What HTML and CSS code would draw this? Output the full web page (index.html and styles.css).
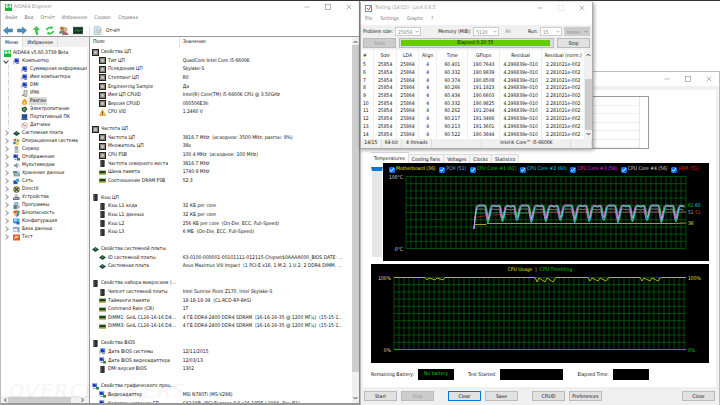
FILE: index.html
```html
<!DOCTYPE html>
<html lang="ru">
  <head>
    <meta charset="UTF-8" />
    <meta name="viewport" content="width=device-width, initial-scale=1.0" />
    <title>AIDA64 Engineer</title>
    <link rel="stylesheet" href="styles.css">
  </head>
  <body>
    <svg class="sprite" aria-hidden="true">
      <symbol id="i-cpu" viewBox="0 0 14 14"><rect x="1" y="1" width="12" height="12" fill="#8d8874" stroke="#222" stroke-width="2"/><rect x="4" y="4" width="6" height="6" fill="#d4d4d4" stroke="#777"/></symbol>
      <symbol id="i-chip" viewBox="0 0 14 14"><path d="M2 2h10M2 5h10M2 8h10M2 11h10" stroke="#777" stroke-width="1.5"/><rect x="3" y="0" width="8" height="14" fill="#303030"/><path d="M5 2v10" stroke="#666"/></symbol>
      <symbol id="i-ram" viewBox="0 0 14 14"><rect y="3" width="14" height="8" fill="#23923a"/><rect x="2" y="5" width="10" height="3" fill="#222"/><path d="M0 10h14" stroke="#d9b53c" stroke-width="2"/></symbol>
      <symbol id="i-board" viewBox="0 0 14 14"><path d="M7 2l7 5-7 5-7-5z" fill="#17442a"/><path d="M7 4l3 2-3 2-3-2z" fill="#4f8a62"/></symbol>
      <symbol id="i-pc" viewBox="0 0 14 14"><path d="M0 4h3v9H0z" fill="#c3c8d2"/><rect x="3" y="1" width="9" height="8" fill="#1834c8" stroke="#a9b3cc"/><path d="M8 2h3v5z" fill="#7fa0f5"/><path d="M5 12h8l-2-3H7z" fill="#8a91a0"/></symbol>
      <symbol id="i-gpu" viewBox="0 0 14 14"><rect x="1" y="1" width="9" height="7" fill="#1834c8" stroke="#a9b3cc"/><path d="M6 2h3v4z" fill="#7fa0f5"/><path d="M3 10h4v2H3z" fill="#888"/><rect x="8" y="8" width="6" height="5" fill="#2f8a3e"/></symbol>
      <symbol id="i-warn" viewBox="0 0 14 14"><path d="M7 1l6.500 12H.5z" fill="#fdc526" stroke="#d08a10"/><path d="M7 5v4M7 10v2" stroke="#222" stroke-width="1.500"/></symbol>
      <symbol id="i-ipmi" viewBox="0 0 14 14"><rect x="6" y="1" width="6" height="12" fill="#d5d5cd" stroke="#777"/><path d="M1 12h6V8H4z" fill="#9b9486"/></symbol>
      <symbol id="i-fire" viewBox="0 0 14 14"><path d="M6 0c1 3 5 4 6 8 1 4-2 6-5 6s-6-2-5-6c1-3 4-4 4-8z" fill="#f39619"/><path d="M7 6c3 3 3 7 0 7s-3-4 0-7z" fill="#ffe25a"/></symbol>
      <symbol id="i-power" viewBox="0 0 14 14"><path d="M1 4l8-3 4 5-5 7-6-3z" fill="#3d5146"/><path d="M3 6l5-2 2 3-4 3z" fill="#4fb557"/></symbol>
      <symbol id="i-laptop" viewBox="0 0 14 14"><rect x="2" y="1" width="10" height="8" fill="#1a49c2" stroke="#445"/><path d="M0 12h14l-2-3H2z" fill="#545c6b"/></symbol>
      <symbol id="i-gauge" viewBox="0 0 14 14"><circle cx="7" cy="7" r="6" fill="#f4efef" stroke="#a88"/><path d="M7 8L4 4M7 8l3-2" stroke="#cf2d2d" stroke-width="1.500"/></symbol>
      <symbol id="i-win" viewBox="0 0 14 14"><path d="M2 2q3-2 5 0L6 7Q4 5 1 7z" fill="#f0602c"/><path d="M8 2q3 2 5 0l-1 5q-3 2-5 0z" fill="#79b92d"/><path d="M1 8q3-2 5 0l-1 5q-2-2-5 0z" fill="#2c8ad6"/><path d="M7 8q3 2 5 0l-1 5q-3 2-5 0z" fill="#f8c421"/></symbol>
      <symbol id="i-server" viewBox="0 0 14 14"><rect x="4" y="0" width="6" height="14" fill="#c5cfc8" stroke="#8b968f"/><path d="M5 3h4M5 6h4" stroke="#4b7b63"/></symbol>
      <symbol id="i-sound" viewBox="0 0 14 14"><path d="M2 5h3l4-4v12L5 9H2z" fill="#858c94"/><path d="M11 4q2 3 0 6" fill="none" stroke="#3b78b8"/></symbol>
      <symbol id="i-disk" viewBox="0 0 14 14"><rect x="0" y="2" width="9" height="4" fill="#5c8c8b"/><rect x="2" y="7" width="11" height="5" fill="#9fb9bd" stroke="#48686c"/><circle cx="11" cy="4" r="3" fill="#a7d0e4"/></symbol>
      <symbol id="i-net" viewBox="0 0 14 14"><rect x="1" y="5" width="8" height="7" fill="#1c42cf" stroke="#99a"/><circle cx="9" cy="5" r="4" fill="#58a5dd"/><path d="M7 3l3 1-1 3z" fill="#48ae4d"/></symbol>
      <symbol id="i-dx" viewBox="0 0 14 14"><circle cx="7" cy="7" r="6" fill="#e7d721" stroke="#222"/><path d="M3 3l8 8M11 3l-8 8" stroke="#2340a8" stroke-width="2.500"/></symbol>
      <symbol id="i-dev" viewBox="0 0 14 14"><rect x="3" y="1" width="7" height="6" fill="#b8c2c8"/><path d="M0 12V8l4-2h9v6z" fill="#64757d"/><path d="M2 9h9" stroke="#dfe5e7"/></symbol>
      <symbol id="i-apps" viewBox="0 0 14 14"><rect x="2" y="0" width="9" height="7" fill="#9fb7cf"/><rect x="1" y="6" width="7" height="8" fill="#597e8f"/><rect x="7" y="7" width="6" height="6" fill="#a8a698"/></symbol>
      <symbol id="i-shield" viewBox="0 0 14 14"><path d="M7 0l6 2v5H7z" fill="#3ca346"/><path d="M7 0L1 2v5h6z" fill="#e3552d"/><path d="M1 7h6v7Q2 12 1 7z" fill="#f5c42c"/><path d="M13 7H7v7q5-2 6-7z" fill="#2e6fd0"/></symbol>
      <symbol id="i-conf" viewBox="0 0 14 14"><rect x="0" y="1" width="13" height="10" rx="2" fill="#4b9bdf"/><path d="M2 3h6v3H2z" fill="#bfe1fa"/><path d="M7 8h6v5H7z" fill="#2c67ad"/></symbol>
      <symbol id="i-db" viewBox="0 0 14 14"><rect x="0" y="3" width="9" height="8" fill="#e8eef7" stroke="#7a8eb3"/><path d="M0 4h9" stroke="#4a76bd" stroke-width="2"/><path d="M10 2h3v11h-3z" fill="#8c9bb1"/></symbol>
      <symbol id="i-test" viewBox="0 0 14 14"><rect x="0" y="1" width="14" height="12" fill="#ee5c22"/><path d="M3 10l3-6 2 4 3-4" stroke="#fff" fill="none" stroke-width="1.500"/></symbol>
      <symbol id="i-arrow" viewBox="0 0 20 16"><path d="M1 8l8-7v4h10v6H9v4z" fill="#4c8fc2" stroke="#2c6b9d"/></symbol>
      <symbol id="i-up" viewBox="0 0 8 5"><path d="M1 4l3-3 3 3" fill="none" stroke="#333" stroke-width="1.500"/></symbol>
      <symbol id="i-down" viewBox="0 0 8 5"><path d="M1 1l3 3 3-3" fill="none" stroke="#333" stroke-width="1.500"/></symbol>
      <symbol id="i-min" viewBox="0 0 10 10"><path d="M1 5h8" stroke="currentColor"/></symbol>
      <symbol id="i-max" viewBox="0 0 10 10"><rect x="1" y="1" width="8" height="8" fill="none" stroke="currentColor"/></symbol>
      <symbol id="i-close" viewBox="0 0 10 10"><path d="M1 1l8 8M9 1L1 9" stroke="currentColor"/></symbol>
    </svg>

    <main class="desktop">
      <!-- AIDA64 -->
      <section class="window aida">
        <header class="titlebar">
          <span class="logo">64</span>
          <span class="title">AIDA64 Engineer</span>
          <button aria-label="Свернуть"><svg><use href="#i-min"/></svg></button>
          <button aria-label="Развернуть"><svg><use href="#i-max"/></svg></button>
          <button aria-label="Закрыть"><svg><use href="#i-close"/></svg></button>
        </header>
        <nav class="menu">
          <a href="#">Файл</a><a href="#">Вид</a><a href="#">Отчёт</a><a href="#">Избранное</a><a href="#">Сервис</a><a href="#">Справка</a>
        </nav>
        <div class="toolbar">
          <button aria-label="Назад"><svg><use href="#i-arrow"/></svg></button>
          <button aria-label="Вперёд" class="flip"><svg><use href="#i-arrow"/></svg></button>
          <button aria-label="Вверх"><svg viewBox="0 0 20 18"><path d="M11 17Q8 12 9 7H5l6-6 6 6h-4q-1 5 1 10z" fill="#3fcb45" stroke="#1e9a2b"/></svg></button>
          <button aria-label="Обновить"><svg viewBox="0 0 20 18" fill="none" stroke="#38c445" stroke-width="3"><path d="M3 8q2-6 10-5M17 10q-2 6-10 5"/><path d="M11 0l6 3-5 4zM9 18l-6-3 5-4z" fill="#38c445" stroke="none"/></svg></button>
          <button aria-label="Пользователи"><svg viewBox="0 0 20 18"><circle cx="6" cy="5" r="4" fill="#b27b3b"/><path d="M0 15q0-6 6-6t6 6z" fill="#5d8f63"/><circle cx="12" cy="7" r="4" fill="#e6b98a" stroke="#85552b"/><path d="M6 18q0-6 6-6t7 6z" fill="#a56b6b"/></svg></button>
          <button aria-label="Монитор"><svg viewBox="0 0 20 18"><rect y="2" width="20" height="14" fill="#14351d" stroke="#889"/><path d="M2 10h4l2-4 3 6 2-4h5" fill="none" stroke="#37c652"/></svg></button>
          <button class="report"><svg viewBox="0 0 20 18"><path d="M2 1h11l3 3v13H2z" fill="#d9e9f5" stroke="#8aa8bd"/><path d="M5 6h7M5 9h6M5 12h5" stroke="#82a7c2"/><path d="M18 6l-7 9-2 1 1-3 7-8z" fill="#e2ad3c"/></svg>Отчёт</button>
        </div>
        <div class="panes">
          <aside class="side">
            <div class="side-tabs"><button class="active">Меню</button><button>Избранное</button></div>
            <ul class="tree">
              <li><span class="logo">64</span>AIDA64 v5.60.3739 Beta</li>
              <li class="l1 open"><svg><use href="#i-pc"/></svg>Компьютер</li>
              <li class="l2"><svg><use href="#i-pc"/></svg>Суммарная информация</li>
              <li class="l2"><svg><use href="#i-pc"/></svg>Имя компьютера</li>
              <li class="l2"><svg><use href="#i-pc"/></svg>DMI</li>
              <li class="l2"><svg><use href="#i-ipmi"/></svg>IPMI</li>
              <li class="l2"><svg><use href="#i-fire"/></svg><mark>Разгон</mark></li>
              <li class="l2"><svg><use href="#i-power"/></svg>Электропитание</li>
              <li class="l2"><svg><use href="#i-laptop"/></svg>Портативный ПК</li>
              <li class="l2"><svg><use href="#i-gauge"/></svg>Датчики</li>
              <li class="l1"><svg><use href="#i-board"/></svg>Системная плата</li>
              <li class="l1"><svg><use href="#i-win"/></svg>Операционная система</li>
              <li class="l1"><svg><use href="#i-server"/></svg>Сервер</li>
              <li class="l1"><svg><use href="#i-gpu"/></svg>Отображение</li>
              <li class="l1"><svg><use href="#i-sound"/></svg>Мультимедиа</li>
              <li class="l1"><svg><use href="#i-disk"/></svg>Хранение данных</li>
              <li class="l1"><svg><use href="#i-net"/></svg>Сеть</li>
              <li class="l1"><svg><use href="#i-dx"/></svg>DirectX</li>
              <li class="l1"><svg><use href="#i-dev"/></svg>Устройства</li>
              <li class="l1"><svg><use href="#i-apps"/></svg>Программы</li>
              <li class="l1"><svg><use href="#i-shield"/></svg>Безопасность</li>
              <li class="l1"><svg><use href="#i-conf"/></svg>Конфигурация</li>
              <li class="l1"><svg><use href="#i-db"/></svg>База данных</li>
              <li class="l1"><svg><use href="#i-test"/></svg>Тест</li>
            </ul>
            <div class="hscroll"><svg class="left"><use href="#i-down"/></svg><i></i><svg class="right"><use href="#i-down"/></svg></div>
          </aside>
          <div class="details">
            <div class="list">
              <div class="list-head"><span>Поле</span><span>Значение</span></div>
              <div class="list-body">
                <table class="props">
                  <colgroup><col class="field"><col></colgroup>
                  <tbody id="props"></tbody>
                </table>
              </div>
            </div>
            <div class="vscroll"><svg><use href="#i-up"/></svg><i></i><svg><use href="#i-down"/></svg></div>
          </div>
        </div>
      </section>

      <!-- System stability test -->
      <section class="window stability">
        <header class="titlebar">
          <span class="title"></span>
          <button aria-label="Minimize"><svg><use href="#i-min"/></svg></button>
          <button aria-label="Maximize"><svg><use href="#i-max"/></svg></button>
          <button aria-label="Close window"><svg><use href="#i-close"/></svg></button>
        </header>
        <div class="page">
          <div class="log"><i></i><i></i><i></i><i></i><i></i><i></i></div>
          <div class="tabs"><button class="active">Temperatures</button><button>Cooling Fans</button><button>Voltages</button><button>Clocks</button><button>Statistics</button></div>
          <div class="sensors">
            <div class="strip"></div>
            <div class="graph">
              <div class="legend">
                <label class="mb"><input type="checkbox" checked>Motherboard (36)</label>
                <label class="pch"><input type="checkbox" checked>PCH (51)</label>
                <label class="c1"><input type="checkbox" checked>CPU Core #1 (61)</label>
                <label class="c2"><input type="checkbox" checked>CPU Core #2 (60)</label>
                <label class="c3"><input type="checkbox" checked>CPU Core #3 (59)</label>
                <label class="c4"><input type="checkbox" checked>CPU Core #4 (56)</label>
                <label class="vrm"><input type="checkbox" checked>VRM (51)</label>
              </div>
              <svg class="plot" id="temps" viewBox="0 0 326 88">
                <g id="tempGrid"></g>
                <text x="20" y="6" class="end">100°C</text>
                <text x="20" y="78" class="end">0°C</text>
                <g id="tempLines"></g>
                <text x="305" y="34" class="c1">61</text>
                <text x="312" y="34" class="c2">60</text>
                <text x="305" y="41" class="pch">51</text>
                <text x="312" y="41" class="vrm">51</text>
                <text x="305" y="52" class="mb">36</text>
              </svg>
            </div>
          </div>
          <div class="graph usage">
            <p class="caption"><span class="mb">CPU Usage</span><span>|</span><span class="c1">CPU Throttling</span></p>
            <svg class="plot" viewBox="0 0 338 89">
              <g id="usageGrid"></g>
              <text x="20" y="6" class="end">100%</text>
              <text x="20" y="78" class="end">0%</text>
              <g id="usageLines"></g>
              <text x="317" y="6" class="mb">100%</text>
              <text x="317" y="78" class="c1">0%</text>
            </svg>
          </div>
          <div class="times">
            <span>Remaining Battery:</span><output class="short">No battery</output>
            <span>Test Started:</span><output class="long"></output>
            <span>Elapsed Time:</span><output class="short"></output>
          </div>
        </div>
        <footer class="actions">
          <button>Start</button><button disabled>Stop</button>
          <button class="default gap">Clear</button><button>Save</button>
          <button class="gap">CPUID</button><button>Preferences</button>
          <button class="last">Close</button>
        </footer>
      </section>

      <!-- LinX -->
      <section class="window linx">
        <header class="titlebar">
          <svg class="app" viewBox="0 0 14 14"><rect x="1" y="1" width="12" height="12" fill="#fff" stroke="#4d9ce0" stroke-width="2"/><path d="M4 6l3 4 5-8" fill="none" stroke="#e4502b" stroke-width="2"/></svg>
          <span class="title">Testing (14/15) - LinX 0.6.5</span>
          <button aria-label="Minimize"><svg><use href="#i-min"/></svg></button>
          <button aria-label="Maximize" disabled><svg><use href="#i-max"/></svg></button>
          <button aria-label="Close window"><svg><use href="#i-close"/></svg></button>
        </header>
        <nav class="menu"><a href="#">File</a><a href="#">Settings</a><a href="#">Graphs</a><a href="#">?</a></nav>
        <form class="setup">
          <label for="size">Problem size:</label>
          <span class="combo"><select id="size"><option>25854</option></select><svg><use href="#i-down"/></svg></span>
          <label for="memory" class="push">Memory (MiB):</label>
          <span class="combo"><select id="memory"><option>5120</option></select><svg><use href="#i-down"/></svg></span>
          <a href="#" class="all">All</a>
          <label for="run" class="push">Run:</label>
          <span class="combo narrow"><select id="run"><option>15</option></select><svg><use href="#i-down"/></svg></span>
          <span class="combo"><select aria-label="Units" disabled><option>times</option></select><svg><use href="#i-down"/></svg></span>
        </form>
        <div class="run">
          <button disabled>Start</button>
          <div class="progress"><div>Elapsed 0:20:55</div></div>
          <button>Stop</button>
        </div>
        <div class="results">
          <table>
            <thead><tr><th class="num">#</th><th class="n">Size</th><th class="n">LDA</th><th class="a">Align</th><th class="t">Time</th><th class="t">GFlops</th><th class="r">Residual</th><th class="r">Residual (norm.)</th></tr></thead>
            <tbody id="results"></tbody>
          </table>
          <div class="vscroll"><svg><use href="#i-up"/></svg><i></i><svg><use href="#i-down"/></svg></div>
        </div>
        <footer class="status"><span>14/15</span><span>64-bit</span><span class="threads">4 threads</span><span class="blank"></span><span class="cpu">Intel® Core™ i5-6600K</span><span></span></footer>
      </section>

      <div class="watermark">OVERCLOCKERS</div>
    </main>
    <script src="script.js"></script>
  </body>
</html>
```
FILE: styles.css
```css
* {
  box-sizing: border-box;
}
body,
html {
  margin: 0;
  padding: 0;
  height: 100%;
  overflow: hidden;
  font-family: "DejaVu Sans Condensed", "Open Sans", sans-serif;
  font-size: 5px;
  line-height: 8px;
  text-rendering: geometricPrecision;
  color: #111;
  background-color: #fff;
}
button,
select,
input {
  font: inherit;
  color: inherit;
  margin: 0;
  padding: 0;
}
button {
  border: none;
  background: none;
  white-space: nowrap;
}
a {
  color: inherit;
  text-decoration: none;
}
svg {
  display: block;
  flex: none;
}
.sprite {
  position: absolute;
  width: 0;
  height: 0;
}
.desktop {
  position: relative;
  height: 100%;
  border-top: 1px solid #35323a;
  overflow: hidden;
}
.window {
  position: absolute;
  display: flex;
  flex-direction: column;
  background-color: #fff;
}
.titlebar {
  display: flex;
  align-items: center;
  flex: none;
  height: 12px;
  padding: 0 7px 0 4px;
  color: #999;
}
.title {
  flex: 1;
  margin-left: 3px;
}
.titlebar button {
  width: 21px;
  height: 8px;
  display: flex;
  align-items: center;
  justify-content: flex-end;
  color: #888;
}
.titlebar button:disabled {
  color: #ddd;
}
.titlebar button svg {
  width: 6px;
  height: 6px;
}
.logo {
  flex: none;
  width: 7px;
  height: 7px;
  background-color: #16b535;
  color: #fff;
  font-weight: bold;
  line-height: 7px;
  text-align: center;
}
.menu {
  display: flex;
  flex: none;
  gap: 7px;
  height: 11px;
  padding: 1px 4px;
  color: #777;
}

/* AIDA64 */
.aida {
  left: 0;
  top: 0;
  width: 50%;
  height: 100%;
  border-left: 1px solid #bbb;
  border-right: 1px solid #888;
  border-bottom: 2px solid #999;
}
.aida .logo + .title {
  margin-left: 2px;
}
.toolbar {
  display: flex;
  align-items: center;
  flex: none;
  gap: 4px;
  height: 12px;
  padding-left: 2px;
}
.toolbar button {
  display: flex;
  align-items: center;
  gap: 3px;
}
.toolbar svg {
  width: 10px;
  height: 9px;
}
.toolbar .flip svg {
  transform: scaleX(-1);
}
.toolbar .report {
  margin-left: 2px;
  padding-left: 3px;
  border-left: 1px solid #ddd;
}
.panes {
  display: flex;
  flex: 1;
  min-height: 0;
  border-top: 1px solid #999;
  background-color: #f0f0f0;
}
.side {
  display: flex;
  flex-direction: column;
  width: 24%;
  background-color: #fff;
}
.side-tabs {
  display: flex;
  flex: none;
  height: 10px;
  background-color: #f0f0f0;
}
.side-tabs button {
  padding: 0 4px;
  border-right: 1px solid #ddd;
}
.side-tabs .active {
  background-color: #fff;
}
.tree {
  flex: 1;
  margin: 0;
  padding: 2px 0 0 3px;
  list-style: none;
  overflow: hidden;
}
.tree li {
  display: flex;
  align-items: center;
  gap: 2px;
  height: 8px;
  white-space: nowrap;
}
.tree li > svg {
  width: 7px;
  height: 7px;
}
.tree .l1::before {
  content: "";
  flex: none;
  width: 3px;
  height: 3px;
  margin: 0 3px 0 0;
  border-top: 1px solid #999;
  border-right: 1px solid #999;
  transform: rotate(45deg);
}
.tree .open::before {
  transform: rotate(135deg);
  border-color: #444;
}
.tree .l2 {
  margin-left: 4px;
  padding-left: 12px;
  border-left: 1px dotted #ccc;
}
.tree mark {
  margin-left: -1px;
  padding: 0 1px;
  color: inherit;
  background-color: #d9d9d9;
}
.hscroll,
.vscroll {
  display: flex;
  align-items: center;
  justify-content: space-between;
  flex: none;
  background-color: #f0f0f0;
}
.hscroll {
  height: 7px;
  padding: 0 2px;
}
.hscroll i {
  flex: 1;
  height: 6px;
  margin-right: 9px;
  background-color: #cdcdcd;
}
.hscroll svg,
.vscroll svg {
  width: 5px;
  height: 4px;
}
.hscroll .left {
  transform: rotate(90deg);
}
.hscroll .right {
  transform: rotate(-90deg);
}
.vscroll {
  flex-direction: column;
  width: 7px;
  padding: 3px 0;
}
.vscroll i {
  flex: 1;
  width: 7px;
  background-color: #cdcdcd;
}
.details {
  display: flex;
  flex: 1;
  min-width: 0;
  margin-left: 2px;
  border-left: 1px solid #999;
  background-color: #fff;
}
.details .vscroll i {
  margin: 1px 0 24px;
}
.list {
  display: flex;
  flex-direction: column;
  flex: 1;
  min-width: 0;
}
.list-head {
  display: flex;
  flex: none;
  height: 11px;
  line-height: 11px;
}
.list-head span:first-child {
  width: 34%;
  padding-left: 3px;
}
.list-head span:last-child {
  padding-left: 3px;
  border-left: 1px solid #e5e5e5;
}
.list-body {
  flex: 1;
  min-height: 0;
  overflow: hidden;
}
.props {
  width: 100%;
  height: calc(100% + 5px);
  table-layout: fixed;
  border-spacing: 0;
}
.props .field {
  width: 35%;
}
.props td {
  padding: 0;
  line-height: 8px;
  overflow: hidden;
  white-space: nowrap;
  text-overflow: ellipsis;
}
.props td + td {
  padding: 0 7px 0 1px;
}
.props .cell {
  display: flex;
  align-items: center;
  gap: 2px;
  padding: 0 4px 0 9px;
}
.props .group .cell {
  padding-left: 2px;
}
.props .cell svg {
  width: 7px;
  height: 7px;
}
.props .cell span {
  overflow: hidden;
  text-overflow: ellipsis;
}

/* Stability test */
.stability {
  left: 50%;
  right: 0;
  top: 70px;
  bottom: 0;
  border: 1px solid #bbb;
  border-width: 1px 1px 0;
  background-color: #f0f0f0;
}
.stability .titlebar {
  height: 14px;
  background-color: #fff;
}
.page {
  flex: 1;
  margin: 4px 3px 0 2px;
  padding: 6px 7px 0 8px;
  background-color: #fff;
}
.log {
  display: grid;
  grid-auto-rows: 1fr;
  width: 61%;
  height: 53px;
  margin-left: 72px;
  padding-right: 8px;
  border: 1px solid #999;
}
.log i {
  border-right: 1px solid #e5e5e5;
  border-bottom: 1px solid #eee;
}
.tabs {
  display: flex;
  align-items: flex-end;
  height: 14px;
}
.tabs button {
  height: 9px;
  padding: 0 3px;
  border: 1px solid #ddd;
  border-width: 1px 1px 0 0;
  background-color: #f4f4f4;
}
.tabs .active {
  height: 11px;
  background-color: #fff;
}
.sensors {
  display: flex;
}
.strip {
  flex: none;
  width: 12px;
  margin: 4px 0 3px;
  border: 1px solid #fff;
  border-top: 4px solid #0078d7;
  background-color: #e6e6e6;
}
.graph {
  flex: 1;
  min-width: 0;
  background-color: #000;
  color: #ddd;
}
.legend {
  display: flex;
  justify-content: space-between;
  padding: 3px 10px 0 6px;
  line-height: 7px;
}
.legend label {
  display: flex;
  align-items: center;
  gap: 1px;
  white-space: nowrap;
}
.legend input {
  width: 6px;
  height: 6px;
}
.plot {
  width: 100%;
  fill: #ddd;
}
.plot .end {
  text-anchor: end;
}
.plot polyline,
.plot path {
  fill: none;
}
.mb {
  color: #e0e000;
  fill: #e0e000;
}
.pch {
  color: #9fb4dc;
  fill: #9fb4dc;
}
.c1 {
  color: #00d000;
  fill: #00d000;
}
.c2 {
  color: #00d8e8;
  fill: #00d8e8;
}
.c3 {
  color: #e030e0;
  fill: #e030e0;
}
.c4 {
  color: #ddd;
  fill: #ddd;
}
.vrm {
  color: #e02020;
  fill: #e02020;
}
.usage {
  margin-top: 3px;
}
.caption {
  display: flex;
  justify-content: center;
  gap: 3px;
  margin: 0;
  padding-top: 2px;
}
.times {
  display: flex;
  align-items: center;
  gap: 4px;
  padding-top: 6px;
}
.times output {
  height: 11px;
  margin-right: 10px;
  line-height: 11px;
  text-align: center;
  color: #00d000;
  background-color: #000;
}
.times .short {
  width: 36px;
}
.times .long {
  width: 63px;
}
.actions {
  display: flex;
  flex: none;
  gap: 4px;
  padding: 4px 4px 4px 3px;
}
.actions button,
.run button {
  width: 33px;
  height: 10px;
  line-height: 8px;
  border: 1px solid #bbb;
  background-color: #e1e1e1;
}
.actions button:disabled,
.run button:disabled {
  color: #999;
  background-color: #ccc;
}
.actions .default {
  border-color: #0078d7;
}
.actions .gap {
  margin-left: 10px;
}
.actions .last {
  margin-left: auto;
}

/* LinX */
.linx {
  left: 50%;
  top: 1px;
  width: 233px;
  background-color: #f0f0f0;
  border: 1px solid #aaa;
  border-top: none;
  box-shadow: 1px 1px 4px rgba(0, 0, 0, 0.4);
}
.linx .titlebar,
.linx .menu {
  background-color: #fff;
}
.linx .menu {
  gap: 8px;
}
.linx .app {
  width: 7px;
  height: 7px;
}
.setup {
  display: flex;
  align-items: center;
  gap: 2px;
  height: 13px;
  padding: 0 2px;
}
.setup .push {
  margin-left: auto;
}
.setup .all {
  margin-left: 4px;
  color: #888;
}
.combo {
  position: relative;
  width: 26px;
}
.combo.narrow {
  width: 22px;
}
.combo select {
  display: block;
  width: 100%;
  height: 9px;
  padding: 0 2px;
  appearance: none;
  border: 1px solid #ccc;
  border-radius: 0;
  color: #888;
  background-color: #fff;
}
.combo select:disabled {
  background-color: #ccc;
  opacity: 1;
}
.combo svg {
  position: absolute;
  right: 2px;
  top: 3px;
  width: 4px;
  height: 3px;
  opacity: 0.5;
}
.run {
  display: flex;
  gap: 3px;
  padding: 0 2px 2px;
}
.progress {
  flex: 1;
  padding: 1px 3px 1px 1px;
  background-color: #ddd;
  border: 1px solid #bbb;
  height: 10px;
}
.progress div {
  background-color: #6c0;
  line-height: 6px;
  text-align: center;
}
.results {
  display: flex;
  height: 89px;
  background-color: #fff;
}
.results table {
  flex: 1;
  height: 100%;
  table-layout: fixed;
  border-spacing: 0;
  text-align: center;
}
.results th,
.results td {
  padding: 0;
  font-weight: normal;
  line-height: 7px;
  white-space: nowrap;
  border-right: 1px solid #eee;
}
.results th {
  height: 12px;
}
.results .num {
  width: 6%;
  padding-left: 2px;
  text-align: left;
}
.results .n {
  width: 10%;
}
.results .a {
  width: 8%;
}
.results .t {
  width: 14%;
}
.results .r {
  width: 19%;
}
.results .vscroll i {
  margin-top: 22px;
  margin-bottom: 2px;
}
.status {
  display: flex;
  height: 9px;
  line-height: 9px;
}
.status span {
  flex: 2;
  text-align: center;
  white-space: nowrap;
  border-right: 1px solid #ddd;
}
.status .threads {
  flex: 3;
}
.status .blank {
  flex: 5;
}
.status .cpu {
  flex: 9;
}
.watermark {
  position: absolute;
  left: 8px;
  bottom: 4px;
  font: italic bold 20px/20px "DejaVu Sans", sans-serif;
  color: rgba(0, 0, 0, 0.03);
  pointer-events: none;
}
```
FILE: script.js
```javascript
const props = [
  ["cpu", "Свойства ЦП"],
  ["cpu", "Тип ЦП", "QuadCore Intel Core i5-6600K"],
  ["cpu", "Псевдоним ЦП", "Skylake-S"],
  ["cpu", "Степпинг ЦП", "R0"],
  ["cpu", "Engineering Sample", "Да"],
  ["cpu", "Имя ЦП CPUID", "Intel(R) Core(TM) i5-6600K CPU @ 3.50GHz"],
  ["cpu", "Версия CPUID", "000506E3h"],
  ["warn", "CPU VID", "1.2460 V"],
  [],
  ["cpu", "Частота ЦП"],
  ["cpu", "Частота ЦП", "3816.7 MHz  (исходное: 3500 MHz, разгон: 9%)"],
  ["cpu", "Множитель ЦП", "38x"],
  ["cpu", "CPU FSB", "100.4 MHz  (исходное: 100 MHz)"],
  ["chip", "Частота северного моста", "3816.7 MHz"],
  ["ram", "Шина памяти", "1740.9 MHz"],
  ["ram", "Соотношение DRAM:FSB", "52:3"],
  [],
  ["chip", "Кэш ЦП"],
  ["chip", "Кэш L1 кода", "32 КБ per core"],
  ["chip", "Кэш L1 данных", "32 КБ per core"],
  ["chip", "Кэш L2", "256 КБ per core  (On-Die, ECC, Full-Speed)"],
  ["chip", "Кэш L3", "6 МБ  (On-Die, ECC, Full-Speed)"],
  [],
  ["board", "Свойства системной платы"],
  ["board", "ID системной платы", "63-0100-000001-00101111-012115-Chipset$0AAAA000_BIOS DATE: 12/11/15"],
  ["board", "Системная плата", "Asus Maximus VIII Impact  (1 PCI-E x16, 1 M.2, 1 U.2, 2 DDR4 DIMM, Audio)"],
  [],
  ["chip", "Свойства набора микросхем (чипсета)"],
  ["chip", "Чипсет системной платы", "Intel Sunrise Point Z170, Intel Skylake-S"],
  ["ram", "Тайминги памяти", "18-18-18-39  (CL-RCD-RP-RAS)"],
  ["ram", "Command Rate (CR)", "1T"],
  ["ram", "DIMM1: GeIL CL16-16-16 D4-2400", "4 ГБ DDR4-2400 DDR4 SDRAM  (16-16-16-35 @ 1200 МГц)  (15-15-15-35)"],
  ["ram", "DIMM3: GeIL CL16-16-16 D4-2400", "4 ГБ DDR4-2400 DDR4 SDRAM  (16-16-16-35 @ 1200 МГц)  (15-15-15-35)"],
  [],
  ["chip", "Свойства BIOS"],
  ["pc", "Дата BIOS системы", "12/11/2015"],
  ["gpu", "Дата BIOS видеоадаптера", "12/03/13"],
  ["chip", "DMI версия BIOS", "1302"],
  [],
  ["gpu", "Свойства графического процессора"],
  ["gpu", "Видеоадаптер", "MSI N780Ti (MS-V298)"],
  ["gpu", "Кодовое название ГП", "GK110B  (PCI Express 3.0 x16 10DE / 100A, Rev B1)"],
];

document.getElementById("props").innerHTML = props
  .map(([icon, name, value]) => {
    if (!icon) return "<tr><td>&nbsp;</td><td></td></tr>";
    return `<tr class="${value ? "" : "group"}">
      <td><div class="cell"><svg><use href="#i-${icon}"/></svg><span>${name}</span></div></td>
      <td>${(value || "").replace(/ {2}/g, "&nbsp; ")}</td></tr>`;
  })
  .join("");

const runs = [
  [5, "60.401", "190.7643"],
  [6, "60.332", "190.9839"],
  [7, "60.374", "190.8508"],
  [8, "60.266", "191.1923"],
  [9, "60.434", "190.6603"],
  [10, "60.332", "190.9825"],
  [11, "60.262", "191.2044"],
  [12, "60.217", "191.3466"],
  [13, "60.213", "191.3601"],
  [14, "60.522", "190.3844"],
];

document.getElementById("results").innerHTML = runs
  .map(
    ([n, time, gflops]) => `<tr><td class="num">${n}</td><td>25854</td><td>25864</td><td>4</td>
      <td>${time}</td><td>${gflops}</td><td>4.296839e-010</td><td>2.281021e-002</td></tr>`
  )
  .join("");

function drawGrid(id, x0, x1, y0, y1) {
  let d = "";
  for (let i = 0; i <= 10; i++) {
    const y = y0 + ((y1 - y0) * i) / 10;
    d += `M${x0} ${y}H${x1}`;
  }
  for (let x = x0; x <= x1; x += 5) {
    d += `M${x} ${y0}V${y1}`;
  }
  document.getElementById(id).innerHTML = `<path d="${d}" stroke="#006c10" stroke-width="0.7"/>`;
}

function line(points, color, width = 0.8) {
  return `<polyline points="${points.map((p) => p.join(",")).join(" ")}" stroke="${color}" stroke-width="${width}"/>`;
}

drawGrid("tempGrid", 23, 303, 3.5, 75.5);
drawGrid("usageGrid", 23, 315, 3.5, 75.5);

// one core: load plateaus with a short drop between the runs
function core(top, bottom, shift) {
  const points = [[91, 56], [92, 45]];
  for (let i = 0; i < 15; i++) {
    const x = 91 + i * 14.45 + shift;
    const wobble = (i * 7) % 3;
    points.push([x + 2.5, top + 2], [x + 4, top], [x + 8, top + wobble / 2], [x + 11, top], [x + 12, top + 3]);
    if (i < 14) {
      points.push([x + 13, bottom - 5], [x + 14, bottom - wobble], [x + 15, bottom - 3], [x + 16, bottom - 8]);
    }
  }
  return points.filter((p) => p[0] <= 303);
}

document.getElementById("tempLines").innerHTML =
  line([[91, 51.5], [103, 51.5], [104, 50.5], [290, 50.5], [303, 50]], "#c8c800") +
  line([[91, 45], [97, 43.5], [110, 42], [130, 41], [150, 40], [170, 39.5], [303, 39]], "#c02020") +
  line([[91, 41], [110, 40], [160, 39], [303, 39]], "#65759a", 0.5) +
  line(core(32, 48, 0.8), "#00b820") +
  line(core(36, 49, -0.4), "#aaaaaa", 0.7) +
  line(core(33, 50, 0), "#00c8e0") +
  line(core(32, 47, -0.6), "#d860e0") +
  line(core(33, 46, 0.3), "#cfd0ee", 0.5);

const usage = [[23, 3.5]];
[[54, 74, 2], [164, 185, 4], [217, 240, 3], [269, 292, 3]].forEach(([from, to, depth]) => {
  usage.push([from, 3.5]);
  for (let x = from + 2, i = 0; x < to - 1; x += 2, i++) {
    usage.push([x, 4 + (((i * 5 + 3) % 4) * depth) / 3]);
  }
  usage.push([to, 3.5]);
});
usage.push([315, 3.5]);

document.getElementById("usageLines").innerHTML =
  line([[23, 75.5], [315, 75.5]], "#00d020") + line(usage, "#d8d800");
```
